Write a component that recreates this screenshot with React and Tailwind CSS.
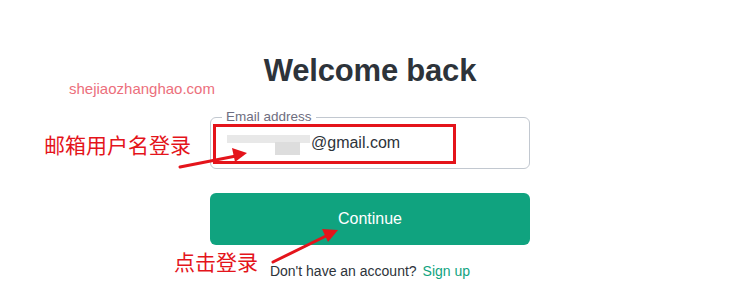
export default function App() {
  return (
    <div className="relative w-[740px] h-[287px] overflow-hidden bg-white font-['Liberation_Sans',Arial,sans-serif]">
      {/* login form */}
      <div className="w-[320px] mx-auto pt-[51px] flex flex-col">
        <h1 className="text-center text-[31px] leading-[40px] font-bold text-[#2d333a] tracking-[-0.2px]">Welcome back</h1>

        <div className="relative mt-[26px] h-[52px] rounded-md border border-[#c2c8d0] flex items-center pl-4">
          <span className="absolute left-[11px] -top-[9px] bg-white px-1 text-[13.5px] leading-4 text-[#6e6e80]">Email address</span>
          <span className="relative inline-block w-[84px] h-[24px]">
            <span className="absolute left-0 top-[4px] w-[83px] h-[8px] bg-[#e8e8e8]" />
            <span className="absolute left-[48px] top-[11px] w-[25px] h-[13px] bg-[#dddddd]" />
          </span>
          <span className="text-[16px] text-[#2d333a]">@gmail.com</span>
        </div>

        <button className="mt-6 h-[52px] rounded-md bg-[#10a37f] text-white text-[16px]">Continue</button>

        <p className="mt-4 text-center text-[14px] leading-5 text-[#2d333a]">
          Don't have an account?<span className="ml-1.5 text-[#10a37f]">Sign up</span>
        </p>
      </div>

      {/* annotations */}
      <span className="absolute left-[69px] top-[78px] text-[15px] text-[#ec6f7c]">shejiaozhanghao.com</span>
      <div className="absolute left-[213px] top-[124px] w-[243px] h-[40px] border-[3px] border-[#e4141b]" />
      <span className="absolute left-[44px] top-[131px] text-[21px] leading-[26px] text-[#e4141b] font-['Noto_Sans_CJK_SC',sans-serif]">邮箱用户名登录</span>
      <span className="absolute left-[174px] top-[248px] text-[21px] leading-[26px] text-[#e4141b] font-['Noto_Sans_CJK_SC',sans-serif]">点击登录</span>
      <svg className="absolute left-0 top-0" width="740" height="287">
        <g stroke="#e4141b" strokeWidth="3" fill="#e4141b" strokeLinecap="round">
          <line x1="180" y1="167" x2="236" y2="156" />
          <polygon points="247,153 232,148 235,162" stroke="none" />
          <line x1="273" y1="262" x2="328" y2="235" />
          <polygon points="338,230 322,229 328,242" stroke="none" />
        </g>
      </svg>
    </div>
  );
}
